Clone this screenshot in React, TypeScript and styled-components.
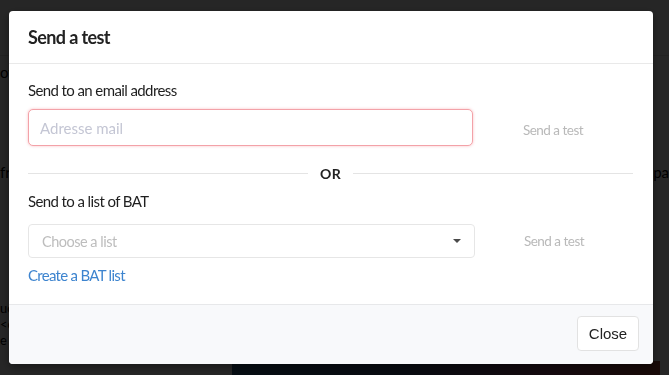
import React from 'react';
import styled, { createGlobalStyle } from 'styled-components';

const GlobalStyle = createGlobalStyle`
  html, body {
    margin: 0;
    padding: 0;
    height: 100%;
    overflow: hidden;
  }
  body {
    font-family: 'Lato', 'Noto Sans', sans-serif;
    background: #ffffff;
  }
  * { box-sizing: border-box; }
`;

const SendTestModal: React.FC = () => {
  return (
    <>
      <GlobalStyle />
      <Page>
        <PageTop />
        <PageRow>
          <Fragment>ov</Fragment>
        </PageRow>
        <PageRow $top={80}>
          <Fragment>fr</Fragment>
          <Fragment>pa</Fragment>
        </PageRow>
        <PageLines>
          <Fragment>uc</Fragment>
          <Fragment>&lt;c</Fragment>
          <Fragment>e</Fragment>
        </PageLines>
        <PageImage />
      </Page>

      <Overlay>
        <Modal>
          <Header>
            <Title>Send a test</Title>
          </Header>

          <Body>
            <Label>Send to an email address</Label>
            <FieldRow>
              <EmailInput placeholder="Adresse mail" autoFocus />
              <GhostButton type="button" $offset={4}>Send a test</GhostButton>
            </FieldRow>

            <Divider>
              <Line />
              <DividerText>OR</DividerText>
              <Line />
            </Divider>

            <Label $spaced>Send to a list of BAT</Label>
            <FieldRow>
              <Select>
                <SelectPlaceholder>Choose a list</SelectPlaceholder>
                <Caret viewBox="0 0 8 4" aria-hidden>
                  <path d="M0 0h8L4 4z" fill="#4a4a4a" />
                </Caret>
              </Select>
              <GhostButton type="button">Send a test</GhostButton>
            </FieldRow>
            <Link href="#">Create a BAT list</Link>
          </Body>

          <Footer>
            <CloseButton type="button">Close</CloseButton>
          </Footer>
        </Modal>
      </Overlay>
    </>
  );
};

// Background page (under the overlay)
const Page = styled.div`
  height: 100vh;
  background: #ffffff;
  display: flex;
  flex-direction: column;
  font-family: 'Lato', sans-serif;
  font-size: 15px;
  color: #000;
`;

const PageTop = styled.div`
  height: 56px;
  border-bottom: 1px solid #e0e0e0;
`;

const PageRow = styled.div<{ $top?: number }>`
  display: flex;
  justify-content: space-between;
  margin-top: ${(p) => p.$top ?? 6}px;
  line-height: 20px;
`;

const PageLines = styled.div`
  margin-top: 118px;
  display: flex;
  flex-direction: column;
  font-size: 13px;
  line-height: 16px;
`;

const Fragment = styled.span`
  display: block;
`;

const PageImage = styled.div`
  margin: auto 9px 0 232px;
  height: 14px;
  background: linear-gradient(90deg, #2a5a80 0%, #3a4a70 40%, #8a4060 75%, #a04030 100%);
`;

// Modal
const Overlay = styled.div`
  position: fixed;
  inset: 0;
  background: rgba(0, 0, 0, 0.85);
  padding: 11px 0 0 9px;
`;

const Modal = styled.div`
  width: 644px;
  background: #ffffff;
  border-radius: 4px;
  overflow: hidden;
  box-shadow: 0 3px 10px rgba(0, 0, 0, 0.4);
`;

const Header = styled.div`
  height: 53px;
  padding: 0 19px;
  display: flex;
  align-items: center;
  border-bottom: 1px solid #e9e9e9;
`;

const Title = styled.h2`
  margin: 0;
  font-size: 18px;
  font-weight: 700;
  letter-spacing: -0.6px;
  color: #222222;
`;

const Body = styled.div`
  padding: 16px 20px 19px 19px;
  display: flex;
  flex-direction: column;
`;

const Label = styled.div<{ $spaced?: boolean }>`
  font-size: 15px;
  line-height: 20px;
  letter-spacing: -0.6px;
  color: #1f1f1f;
  margin-top: ${(p) => (p.$spaced ? 8 : 0)}px;
  margin-bottom: ${(p) => (p.$spaced ? 13 : 9)}px;
`;

const FieldRow = styled.div`
  display: flex;
  align-items: center;
`;

const EmailInput = styled.input`
  flex: 0 0 445px;
  height: 37px;
  border: 1px solid #f3a2a8;
  border-radius: 5px;
  box-shadow: 0 0 3px rgba(240, 110, 120, 0.45);
  padding: 0 11px;
  font-family: 'Lato', sans-serif;
  font-size: 15px;
  color: #222;
  outline: none;
  caret-color: #222;

  &::placeholder {
    color: #c4c6d4;
  }
`;

const GhostButton = styled.button<{ $offset?: number }>`
  flex: 1;
  background: none;
  border: none;
  padding: 0;
  margin-top: ${(p) => p.$offset ?? 0}px;
  font-family: 'Lato', sans-serif;
  font-size: 13.5px;
  letter-spacing: -0.5px;
  color: #b9b9b9;
  text-align: center;
  cursor: pointer;
`;

const Divider = styled.div`
  margin-top: 17px;
  height: 20px;
  display: flex;
  align-items: center;
  gap: 12px;
`;

const Line = styled.div`
  flex: 1;
  height: 1px;
  background: #e4e4e4;
`;

const DividerText = styled.span`
  font-size: 14px;
  font-weight: 700;
  color: #222;
  letter-spacing: 0.3px;
`;

const Select = styled.div`
  flex: 0 0 447px;
  height: 34px;
  border: 1px solid #e6e6e6;
  border-radius: 4px;
  padding: 0 13px;
  display: flex;
  align-items: center;
  justify-content: space-between;
`;

const SelectPlaceholder = styled.span`
  font-size: 14.5px;
  letter-spacing: -0.5px;
  color: #bdbdbd;
`;

const Caret = styled.svg`
  width: 8px;
  height: 4px;
`;

const Link = styled.a`
  margin-top: 7px;
  font-size: 15px;
  line-height: 20px;
  letter-spacing: -0.7px;
  color: #3d84cf;
  text-decoration: none;
  align-self: flex-start;
`;

const Footer = styled.div`
  height: 60px;
  background: #f8f9fb;
  border-top: 1px solid #e7e8ea;
  display: flex;
  align-items: center;
  justify-content: flex-end;
  padding: 0 14px 3px 0;
`;

const CloseButton = styled.button`
  width: 62px;
  height: 35px;
  background: #ffffff;
  border: 1px solid #e2e2e2;
  border-radius: 4px;
  font-family: 'Liberation Sans', Arial, sans-serif;
  font-size: 15px;
  color: #222;
  cursor: pointer;
`;

export default SendTestModal;
